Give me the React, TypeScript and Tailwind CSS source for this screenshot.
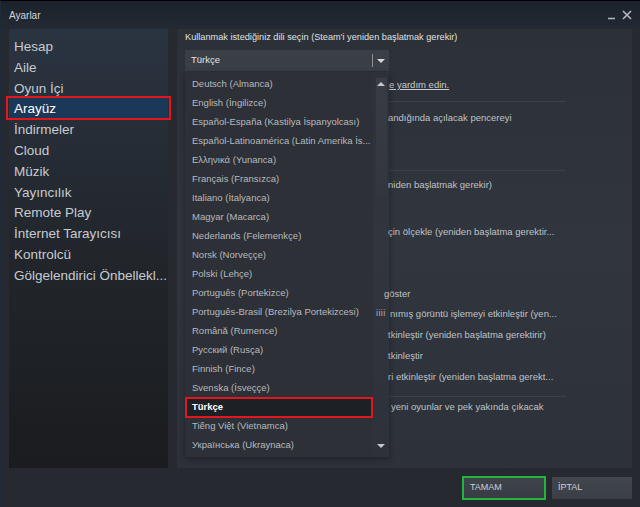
import React from 'react';

const sidebarItems = [
  'Hesap',
  'Aile',
  'Oyun İçi',
  'Arayüz',
  'İndirmeler',
  'Cloud',
  'Müzik',
  'Yayıncılık',
  'Remote Play',
  'İnternet Tarayıcısı',
  'Kontrolcü',
  'Gölgelendirici Önbellekl...',
];

const languages = [
  'Deutsch (Almanca)',
  'English (İngilizce)',
  'Español-España (Kastilya İspanyolcası)',
  'Español-Latinoamérica (Latin Amerika İs...',
  'Ελληνικά (Yunanca)',
  'Français (Fransızca)',
  'Italiano (İtalyanca)',
  'Magyar (Macarca)',
  'Nederlands (Felemenkçe)',
  'Norsk (Norveççe)',
  'Polski (Lehçe)',
  'Português (Portekizce)',
  'Português-Brasil (Brezilya Portekizcesi)',
  'Română (Rumence)',
  'Русский (Rusça)',
  'Finnish (Fince)',
  'Svenska (İsveççe)',
  'Türkçe',
  'Tiếng Việt (Vietnamca)',
  'Українська (Ukraynaca)',
];

const Sidebar: React.FC = () => (
  <div className="w-[159px] shrink-0 pt-[7px] bg-gradient-to-b from-[#2a3441] via-[#22262c] to-[#1a1c1f]">
    {sidebarItems.map((item) => {
      const active = item === 'Arayüz';
      return (
        <div
          key={item}
          className={
            active
              ? 'relative h-[20.8px] pt-[2px] leading-[18.8px] pl-[5px] text-[13.5px] whitespace-nowrap text-white bg-[#1c3858]'
              : 'relative h-[20.8px] pt-[2px] leading-[18.8px] pl-[5px] text-[13.5px] whitespace-nowrap text-[#c6cbd0]'
          }
        >
          {item}
          {active && (
            <span className="absolute -left-[3px] -right-[3px] -top-[2px] -bottom-[1px] border-2 border-[#e3161d]" />
          )}
        </div>
      );
    })}
  </div>
);

const LanguageList: React.FC = () => (
  <div className="absolute left-0 top-full mt-[1px] w-[204px] h-[385px] flex shadow-[0_2px_6px_rgba(0,0,0,0.35)] z-10">
    <div className="w-[188px] bg-[#2d3037] pt-[2.5px]">
      {languages.map((lang) => {
        const selected = lang === 'Türkçe';
        return (
          <div
            key={lang}
            className={
              selected
                ? 'relative h-[19px] flex items-center pl-[7px] text-[9.5px] font-bold text-white bg-[#1d2025] whitespace-nowrap'
                : 'h-[19px] flex items-center pl-[7px] text-[9.5px] text-[#b6babe] whitespace-nowrap overflow-hidden'
            }
          >
            {lang}
            {selected && (
              <span className="absolute inset-x-0 -top-[1px] -bottom-[1px] border-2 border-[#e3161d]" />
            )}
          </div>
        );
      })}
    </div>
    <div className="relative w-[16px] flex flex-col items-center pt-[6px] pb-[9px]">
      <div className="w-[11px] h-[117px] bg-gradient-to-b from-[#383c44] to-[#32363d] flex justify-center pt-[4px]">
        <div className="w-0 h-0 border-x-[4px] border-x-transparent border-b-[4px] border-b-[#c5c9cd]" />
      </div>
      <span className="absolute left-[3px] top-[236px] text-[9px] leading-[10px] text-[#aeb2b6] tracking-[0.4px]">iiii</span>
      <div className="flex-1" />
      <div className="w-0 h-0 border-x-[4px] border-x-transparent border-t-[4px] border-t-[#c5c9cd]" />
    </div>
  </div>
);

const Row: React.FC<{ className: string; children: React.ReactNode }> = ({ className, children }) => (
  <div className={`h-[14px] leading-[14px] text-[9.5px] text-[#bfc3c7] whitespace-nowrap ${className}`}>{children}</div>
);

const Separator: React.FC<{ className: string }> = ({ className }) => (
  <div className={`h-px w-[177px] ml-[204px] bg-[#3c4048] ${className}`} />
);

export default function App() {
  return (
    <div className="w-[640px] h-[507px] flex flex-col overflow-hidden bg-[#262a30] border-t border-black border-l border-l-[#1d2a3a] font-['Liberation_Sans',Arial,sans-serif]">
      {/* title bar */}
      <div className="h-[28px] shrink-0 flex items-center justify-between pl-[8px] pr-[8px] bg-gradient-to-b from-[#1b222c] to-[#242a33]">
        <span className="text-[10px] text-[#d2d6da]">Ayarlar</span>
        <div className="flex items-center gap-[6px]">
          <svg width="8" height="10" viewBox="0 0 8 10">
            <path d="M0 8.5H7" stroke="#b4b9bf" strokeWidth="1.5" />
          </svg>
          <svg width="10" height="10" viewBox="0 0 10 10">
            <path d="M1 1L9 9M9 1L1 9" stroke="#b4b9bf" strokeWidth="1.6" />
          </svg>
        </div>
      </div>

      {/* body */}
      <div className="flex-1 min-h-0 flex pl-[8px]">
        <Sidebar />
        <div className="relative ml-[9px] w-[455px] pl-[8px] bg-gradient-to-b from-[#2c3037] via-[#31353e] to-[#2d3139]">
          <div className="mt-[1px] h-[14px] leading-[14px] text-[9.2px] text-[#dfe3e6] whitespace-nowrap">
            Kullanmak istediğiniz dili seçin (Steam'i yeniden başlatmak gerekir)
          </div>
          <div className="relative mt-[6px] w-[204px] h-[21px] bg-[#3a3e45] flex items-center pl-[6px]">
            <span className="text-[9.5px] text-[#e0e3e6]">Türkçe</span>
            <div className="ml-auto w-px h-[13px] bg-[#8b8f94]" />
            <div className="w-[16px] flex justify-center">
              <div className="w-0 h-0 border-x-[4px] border-x-transparent border-t-[4px] border-t-[#d5d8db]" />
            </div>
            <LanguageList />
          </div>

          <Row className="mt-[7px] ml-[204px]">
            <span className="underline text-[#c8ccd0]">e yardım edin.</span>
          </Row>
          <Separator className="mt-[9px]" />
          <Row className="mt-[9px] ml-[203px]">andığında açılacak pencereyi</Row>
          <Separator className="mt-[45px]" />
          <Row className="mt-[7px] ml-[203px]">niden başlatmak gerekir)</Row>
          <Row className="mt-[33px] ml-[203px]">çin ölçekle (yeniden başlatma gerektir...</Row>
          <Row className="mt-[48px] ml-[199px]">göster</Row>
          <Row className="mt-[6px] ml-[205px]">nımış görüntü işlemeyi etkinleştir (yen...</Row>
          <Row className="mt-[7px] ml-[203px]">tkinleştir (yeniden başlatma gerektirir)</Row>
          <Row className="mt-[7px] ml-[203px]">tkinleştir</Row>
          <Row className="mt-[7px] ml-[203px]">ri etkinleştir (yeniden başlatma gerekt...</Row>
          <Separator className="mt-[12px]" />
          <Row className="mt-[3px] ml-[206px]">yeni oyunlar ve pek yakında çıkacak</Row>
        </div>
      </div>

      {/* footer */}
      <div className="h-[39px] shrink-0 flex justify-end items-start gap-[6px] pt-[8px] pr-[8px]">
        <button className="w-[84px] h-[24px] border-2 border-[#22b53a] bg-gradient-to-b from-[#3e434c] to-[#383c44] text-left pl-[6px] text-[9px] text-[#cdd1d5]">
          TAMAM
        </button>
        <button className="mt-[1px] w-[80px] h-[22px] bg-gradient-to-b from-[#42474f] to-[#3a3f47] text-left pl-[6px] text-[9px] text-[#cdd1d5]">
          İPTAL
        </button>
      </div>
    </div>
  );
}
